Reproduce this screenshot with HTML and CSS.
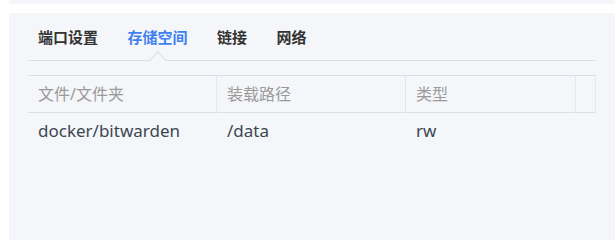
FILE: index.html
```html
<!DOCTYPE html>
<html lang="zh-CN">
<head>
    <meta charset="UTF-8">
    <title>存储空间</title>
    <link rel="stylesheet" href="styles.css">
</head>
<body>

    <div class="topbar"></div>

    <div class="panel">
        <div class="tabs">
            <span class="tab">端口设置</span>
            <span class="tab active">存储空间</span>
            <span class="tab">链接</span>
            <span class="tab">网络</span>
        </div>

        <div class="grid">
            <div class="head">文件/文件夹</div>
            <div class="head">装载路径</div>
            <div class="head">类型</div>
            <div class="head"></div>

            <div class="cell">docker/bitwarden</div>
            <div class="cell">/data</div>
            <div class="cell">rw</div>
            <div class="cell"></div>
        </div>
    </div>

</body>
</html>
```

FILE: styles.css
```css
body {
    margin: 0;
    background-color: #fff;
    font-family: "Noto Sans", "Noto Sans CJK SC", sans-serif;
}

.topbar {
    height: 4px;
    margin-left: 9px;
    background-color: #f4f6f9;
}

.panel {
    margin: 9px 0 0 9px;
    height: 227px;
    padding: 0 19px;
    background-color: #f4f6f9;
}

.tabs {
    display: flex;
    gap: 29.5px;
    padding: 14px 0 13px 10px;
    border-bottom: 1px solid #d9e0e8;
}

.tab {
    position: relative;
    font-size: 15px;
    line-height: 20px;
    font-weight: bold;
    color: #333;
}

.tab.active {
    color: #3f82ef;
}

/* little notch under the active tab */
.tab.active::after {
    content: "";
    position: absolute;
    left: 50%;
    bottom: -19px;
    width: 11px;
    height: 11px;
    margin-left: -6px;
    background-color: #f4f6f9;
    border-top: 1px solid #d9e0e8;
    border-left: 1px solid #d9e0e8;
    transform: rotate(45deg);
}

.grid {
    display: grid;
    grid-template-columns: 189px 189px 170px 1fr;
    margin-top: 14px;
    border-top: 1px solid #d9e0e8;
}

.head {
    height: 36px;
    line-height: 36px;
    padding-left: 10px;
    font-size: 16px;
    color: #9a9a9a;
    border-right: 1px solid #e3e8ee;
    border-bottom: 1px solid #d9e0e8;
}

.head:last-of-type {
    border-right: none;
}

.cell {
    height: 36px;
    line-height: 36px;
    padding-left: 10px;
    font-size: 17px;
    color: #3c4651;
}
```
